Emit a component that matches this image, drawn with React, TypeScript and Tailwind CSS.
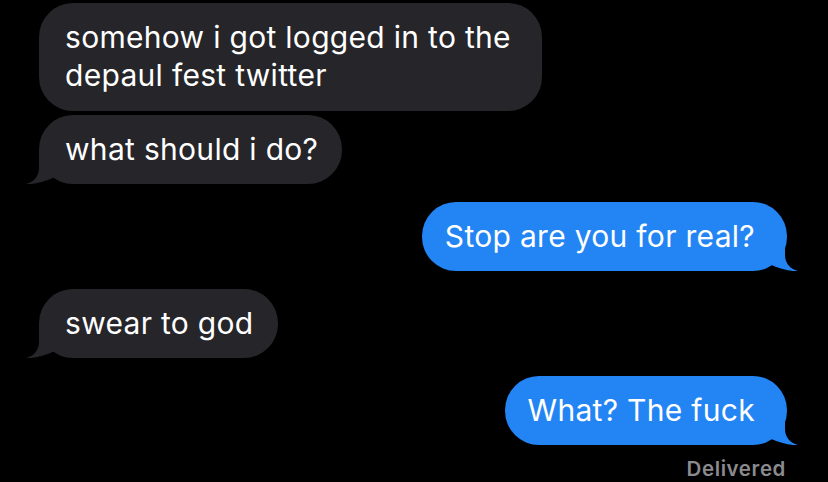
import React from "react";

type Side = "in" | "out";

function Tail({ side, color }: { side: Side; color: string }) {
  const pos = side === "in" ? "left-[-13px]" : "right-[-11px] -scale-x-100";
  return (
    <svg
      className={`absolute bottom-0 ${pos}`}
      width="44"
      height="34"
      viewBox="0 0 44 34"
      aria-hidden="true"
    >
      <path
        d="M13 0 L13 18 C13 26 8 32 0 34 C8 34.6 18 32 29 27 L29 0 Z"
        fill={color}
      />
    </svg>
  );
}

function Bubble({
  side,
  tail,
  wide,
  children,
}: {
  side: Side;
  tail?: boolean;
  wide?: boolean;
  children: React.ReactNode;
}) {
  const incoming = side === "in";
  const color = incoming ? "#262529" : "#2384f4";
  const pad = incoming
    ? wide
      ? "self-start bg-[#262529] pl-[26px] pr-[31px]"
      : "self-start bg-[#262529] pl-[26px] pr-[24px]"
    : "self-end bg-[#2384f4] pl-[23px] pr-[32px]";
  return (
    <div
      className={`relative rounded-[34px] py-4 text-[30px] leading-[37px] text-white tracking-[0.3px] ${pad}`}
    >
      {tail && <Tail side={side} color={color} />}
      <span className="relative">{children}</span>
    </div>
  );
}

export default function App() {
  return (
    <div className="w-[828px] h-[482px] overflow-hidden bg-black pt-[3px] pl-[39px] pr-[41px] flex flex-col font-['Inter','Noto_Sans',sans-serif]">
      <div className="self-start">
        <Bubble side="in" wide>
          <span className="block pb-[1px]">somehow i got logged in to the</span>
          <span className="block pb-[1px]">depaul fest twitter</span>
        </Bubble>
      </div>
      <div className="mt-[4px] flex flex-col">
        <Bubble side="in" tail>
          what should i do?
        </Bubble>
      </div>
      <div className="mt-[18px] flex flex-col">
        <Bubble side="out" tail>
          Stop are you for real?
        </Bubble>
      </div>
      <div className="mt-[18px] flex flex-col">
        <Bubble side="in" tail>
          swear to god
        </Bubble>
      </div>
      <div className="mt-[18px] flex flex-col">
        <Bubble side="out" tail>
          What? The fuck
        </Bubble>
      </div>
      <div className="mt-[11px] self-end pr-[1px] text-[20.5px] leading-[25px] tracking-[0.6px] font-semibold text-[#8b8b8f]">
        Delivered
      </div>
    </div>
  );
}
